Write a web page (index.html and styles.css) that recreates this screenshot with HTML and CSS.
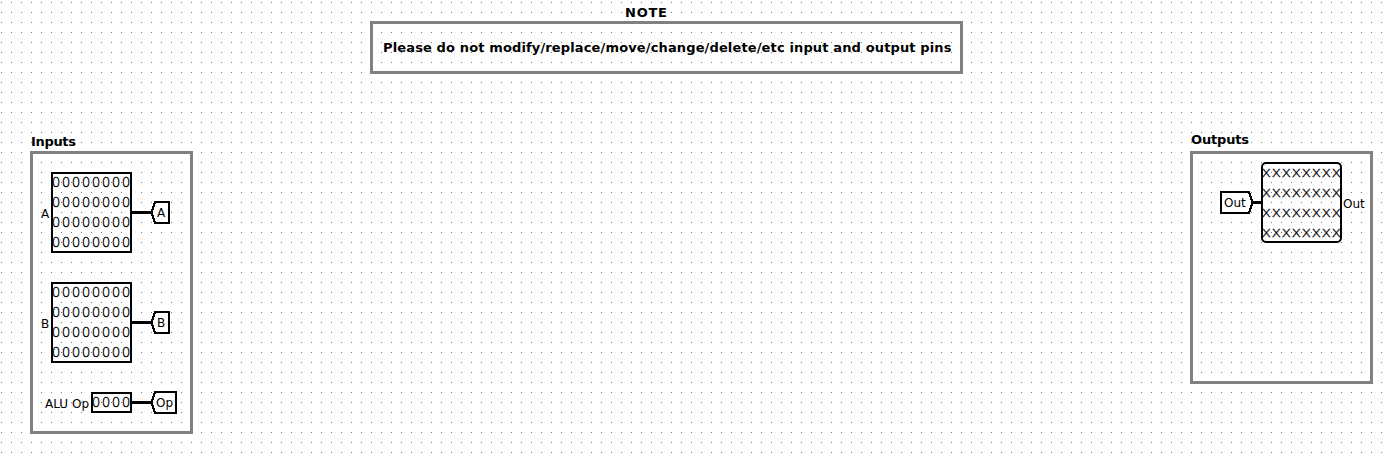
FILE: index.html
```html
<!DOCTYPE html>
<html lang="en">
<head>
<meta charset="utf-8">
<title>ALU circuit</title>
<link rel="stylesheet" href="styles.css">
</head>
<body>
<svg class="canvas" width="1389" height="455" viewBox="0 0 1389 455">
  <defs>
    <pattern id="grid" width="10" height="10" patternUnits="userSpaceOnUse">
      <rect class="dot" x="1" y="2" width="1" height="1"/>
    </pattern>
  </defs>
  <rect width="1389" height="455" fill="url(#grid)"/>

  <!-- Note -->
  <text class="title" x="625" y="17" textLength="42">NOTE</text>
  <rect class="frame" x="371.5" y="22.5" width="590" height="50"/>
  <text class="title" x="383" y="52" textLength="568.5">Please do not modify/replace/move/change/delete/etc input and output pins</text>

  <!-- Inputs -->
  <text class="title" x="31" y="146" textLength="45">Inputs</text>
  <rect class="frame" x="31.5" y="152.5" width="160" height="280"/>

  <g id="input-a">
    <text class="label" x="41" y="218">A</text>
    <rect class="pin" x="52" y="173" width="79" height="79"/>
    <g class="bits" transform="translate(51.8 187)">
      <text>00000000</text><text y="20">00000000</text><text y="40">00000000</text><text y="60">00000000</text>
    </g>
    <path class="wire" d="M130 212.5H153"/>
    <path class="tunnel" d="M155 202H169V223H155L152 214V211Z"/>
    <text class="label" x="157" y="217">A</text>
  </g>

  <g id="input-b">
    <text class="label" x="41" y="328">B</text>
    <rect class="pin" x="52" y="283" width="79" height="79"/>
    <g class="bits" transform="translate(51.8 297)">
      <text>00000000</text><text y="20">00000000</text><text y="40">00000000</text><text y="60">00000000</text>
    </g>
    <path class="wire" d="M130 322.5H153"/>
    <path class="tunnel" d="M155 312H169V333H155L152 324V321Z"/>
    <text class="label" x="157" y="327">B</text>
  </g>

  <g id="input-op">
    <text class="label" x="45" y="408" textLength="44">ALU Op</text>
    <rect class="pin" x="92" y="393" width="39" height="19"/>
    <g class="bits" transform="translate(91.8 407)"><text>0000</text></g>
    <path class="wire" d="M130 402.5H153"/>
    <path class="tunnel" d="M155 392H176V413H155L152 404V401Z"/>
    <text class="label" x="156" y="407">Op</text>
  </g>

  <!-- Outputs -->
  <text class="title" x="1191" y="144" textLength="58">Outputs</text>
  <rect class="frame" x="1191.5" y="152.5" width="180" height="230"/>
  <path class="tunnel" d="M1221 192H1249L1252 201V204L1249 213H1221Z"/>
  <text class="label" x="1224" y="207">Out</text>
  <path class="wire" d="M1251 202.5H1262"/>
  <rect class="pin round" x="1262" y="163" width="79" height="79" rx="4"/>
  <g class="unknown" transform="translate(1261.6 177) scale(1.2 1)">
    <text>xxxxxxxx</text><text y="20">xxxxxxxx</text><text y="40">xxxxxxxx</text><text y="60">xxxxxxxx</text>
  </g>
  <text class="label" x="1343" y="208">Out</text>
</svg>
</body>
</html>
```
FILE: styles.css
```css
body {
  margin: 0;
  background: #fff;
  overflow: hidden;
}

.canvas {
  display: block;
  font-family: "DejaVu Sans", sans-serif;
  fill: #000;
}

.dot {
  fill: #777;
  shape-rendering: crispEdges;
}

.frame {
  fill: none;
  stroke: #808080;
  stroke-width: 3;
  shape-rendering: crispEdges;
}

.pin,
.tunnel {
  fill: none;
  stroke: #000;
  stroke-width: 2;
  shape-rendering: crispEdges;
}

.round {
  shape-rendering: auto;
}

.tunnel {
  fill: #fff;
}

.wire {
  stroke: #000;
  stroke-width: 3;
  shape-rendering: crispEdges;
}

.title {
  font-size: 13px;
  font-weight: bold;
}

.label {
  font-size: 12px;
}

/* Glyph advance plus spacing gives a 10px cell for each bit. */
.bits {
  font-size: 13.5px;
  font-weight: 200;
  letter-spacing: 1.41px;
  stroke: #000;
  stroke-width: .35px;
}

/* 8.333px cells, widened to 10px by the group's 1.2 scale. */
.unknown {
  font-size: 13.5px;
  font-weight: 200;
  letter-spacing: .34px;
  stroke: #000;
  stroke-width: .3px;
}
```
